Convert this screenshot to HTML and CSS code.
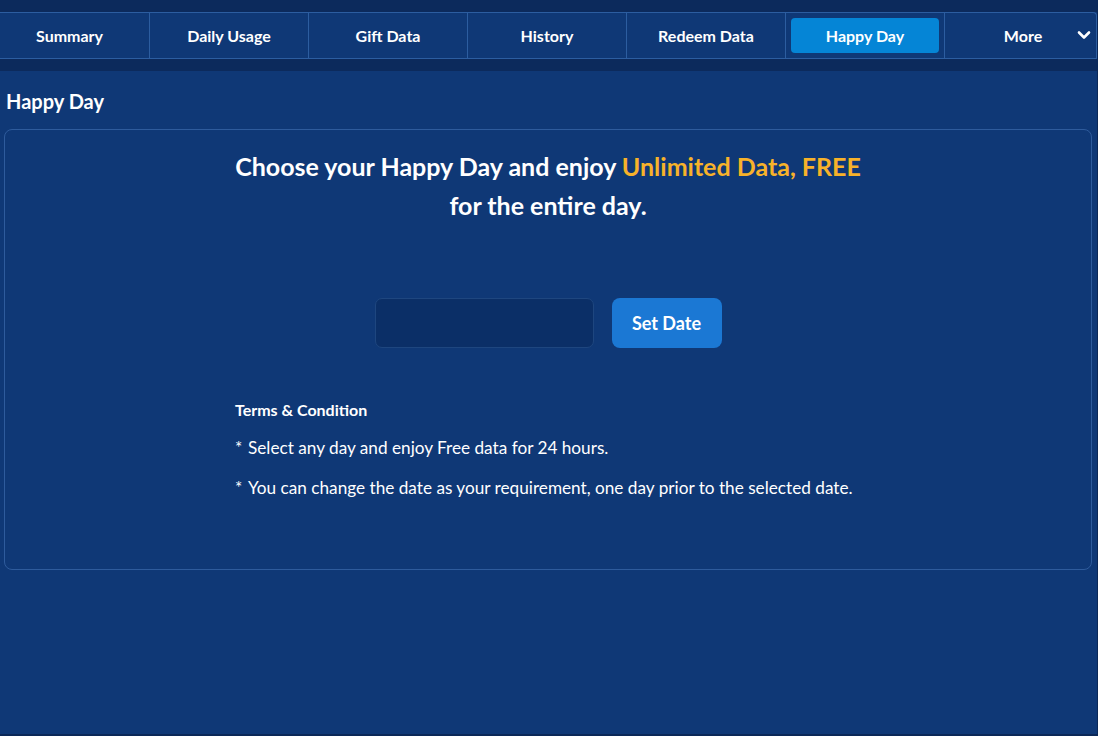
FILE: index.html
```html
<!DOCTYPE html>
<html lang="en">
<head>
    <meta charset="UTF-8">
    <meta name="viewport" content="width=device-width, initial-scale=1.0">
    <title>Happy Day</title>
    <link rel="stylesheet" href="styles.css">
</head>
<body>

    <div class="page">
        <!-- Tab Navigation -->
        <div class="top-strip"></div>
        <ul class="tabs">
            <li class="first"><a href="#">Summary</a></li>
            <li><a href="#">Daily Usage</a></li>
            <li><a href="#">Gift Data</a></li>
            <li><a href="#">History</a></li>
            <li><a href="#">Redeem Data</a></li>
            <li><a href="#" class="active">Happy Day</a></li>
            <li class="more">
                <a href="#">More</a>
                <svg class="chevron" width="14" height="10" viewBox="0 0 14 10">
                    <path d="M2 2.5 L7 7.5 L12 2.5" fill="none" stroke="#fff" stroke-width="2.6" stroke-linecap="round" stroke-linejoin="round"/>
                </svg>
            </li>
        </ul>
        <div class="sub-strip"></div>

        <!-- Main Content -->
        <div class="main-content">
            <h2>Happy Day</h2>
            <div class="happy-card">
                <h1 class="headline">Choose your Happy Day and enjoy <span class="highlight">Unlimited Data, FREE</span><br>for the entire day.</h1>

                <div class="date-row">
                    <input type="text" class="date-input">
                    <button class="set-btn">Set Date</button>
                </div>

                <div class="terms">
                    <h4>Terms &amp; Condition</h4>
                    <p><span class="star">*</span>Select any day and enjoy Free data for 24 hours.</p>
                    <p><span class="star">*</span>You can change the date as your requirement, one day prior to the selected date.</p>
                </div>
            </div>
        </div>
    </div>

</body>
</html>
```

FILE: styles.css
```css
/* General Styles */
* {
    margin: 0;
    padding: 0;
    box-sizing: border-box;
    font-family: 'Lato', 'Open Sans', sans-serif;
}

body {
    background: #0b2858;
    color: white;
    height: 736px;
    overflow: hidden;
}

.page {
    width: 1097px;
    height: 734px;
    background: #0f3876;
    display: flex;
    flex-direction: column;
}

/* Tab Navigation */
.top-strip,
.sub-strip {
    height: 12px;
    background: #0c2a5c;
}

.tabs {
    list-style: none;
    display: grid;
    grid-template-columns: 150px 159px 159px 159px 159px 159px 1fr;
    height: 47px;
    background: #0f3876;
    border-top: 1px solid #2c5da0;
    border-bottom: 1px solid #2c5da0;
    border-right: 1px solid #2c5da0;
    border-top-right-radius: 4px;
}

.tabs li {
    border-right: 1px solid #2c5da0;
    display: flex;
    align-items: center;
    justify-content: center;
    padding: 0 5px;
}

.tabs li.first {
    padding: 0 12px 0 2px;
}

.tabs li:last-child {
    border-right: none;
}

.tabs a {
    color: white;
    text-decoration: none;
    font-size: 16px;
    font-weight: 700;
    display: flex;
    align-items: center;
    justify-content: center;
    width: 100%;
    height: 35px;
    border-radius: 4px;
}

.tabs a.active {
    background: #0585d6;
}

.tabs .more {
    position: relative;
    padding: 0 0 0 5px;
}

.chevron {
    position: absolute;
    right: 5px;
    top: 17px;
}

/* Main Content */
.main-content {
    flex: 1;
    padding: 19px 5px 0 4px;
}

h2 {
    font-size: 20px;
    font-weight: 700;
    margin-left: 2px;
    line-height: 23px;
    margin-bottom: 16px;
}

.happy-card {
    height: 441px;
    border: 1px solid #2e5b9c;
    border-radius: 8px;
    padding-top: 17px;
    display: flex;
    flex-direction: column;
    align-items: center;
}

.headline {
    font-size: 25px;
    font-weight: 700;
    line-height: 39px;
    text-align: center;
}

.highlight {
    color: #f7b22a;
}

.date-row {
    display: flex;
    gap: 18px;
    margin-top: 73px;
}

.date-input {
    width: 219px;
    height: 50px;
    background: #0b2f67;
    border: 1px solid #1e467f;
    border-radius: 7px;
    outline: none;
}

.set-btn {
    width: 110px;
    height: 50px;
    background: #1b78d4;
    color: white;
    border: none;
    border-radius: 8px;
    font-size: 18px;
    font-weight: 700;
    cursor: pointer;
}

.terms {
    width: 626px;
    margin-top: 52px;
}

.terms h4 {
    font-size: 16px;
    font-weight: 700;
    line-height: 20px;
    margin-bottom: 18px;
}

.terms p {
    font-size: 17.2px;
    line-height: 20px;
    margin-bottom: 20px;
}

.star {
    display: inline-block;
    width: 13px;
}
```
